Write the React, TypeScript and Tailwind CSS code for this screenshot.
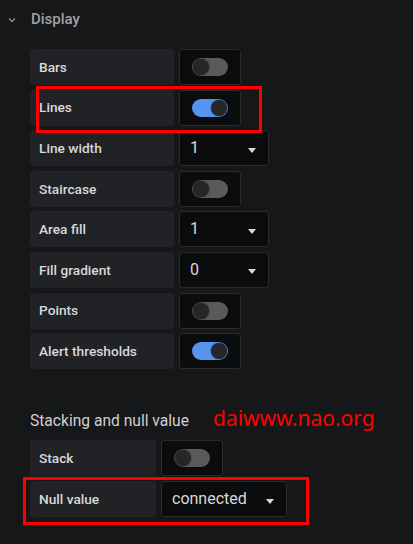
import React from "react";

type Row =
  | { label: string; kind: "toggle"; on: boolean }
  | { label: string; kind: "select"; value: string; width: number };

const displayRows: Row[] = [
  { label: "Bars", kind: "toggle", on: false },
  { label: "Lines", kind: "toggle", on: true },
  { label: "Line width", kind: "select", value: "1", width: 90 },
  { label: "Staircase", kind: "toggle", on: false },
  { label: "Area fill", kind: "select", value: "1", width: 90 },
  { label: "Fill gradient", kind: "select", value: "0", width: 90 },
  { label: "Points", kind: "toggle", on: false },
  { label: "Alert thresholds", kind: "toggle", on: true },
];

const stackRows: Row[] = [
  { label: "Stack", kind: "toggle", on: false },
  { label: "Null value", kind: "select", value: "connected", width: 126 },
];

function Toggle({ on }: { on: boolean }) {
  return (
    <div className="w-[62px] h-[36px] rounded-[3px] border border-[#2a2b2f] bg-[#0b0c0e] flex items-center pl-[12px]">
      <div
        className={
          on
            ? "w-[36px] h-[18px] rounded-full bg-[#5794f2] flex items-center justify-end pr-[1px]"
            : "w-[36px] h-[18px] rounded-full bg-[#5a5a5b] flex items-center justify-start pl-[1px]"
        }
      >
        <div className="w-[16px] h-[16px] rounded-full bg-[#262628] shadow-[0_0_2px_rgba(0,0,0,0.6)]" />
      </div>
    </div>
  );
}

function Select({ value, width }: { value: string; width: number }) {
  return (
    <div
      className="h-[36px] rounded-[3px] border border-[#2a2b2f] bg-[#0b0c0e] flex items-center justify-between pl-[10px] pr-[12px]"
      style={{ width }}
    >
      <span className="text-[16px] text-[#d8d9da] leading-none">{value}</span>
      <span className="mt-[4px] w-0 h-0 border-l-[4px] border-r-[4px] border-t-[5px] border-l-transparent border-r-transparent border-t-[#d8d9da]" />
    </div>
  );
}

function FormRow({ row, labelWidth }: { row: Row; labelWidth: number }) {
  return (
    <div className="flex items-center gap-[5px] h-[36px]">
      <div
        className="h-[36px] rounded-[3px] bg-[#212226] flex items-center pl-[9px] text-[13.7px] font-medium text-[#d8d9da]"
        style={{ width: labelWidth }}
      >
        {row.label}
      </div>
      {row.kind === "toggle" ? <Toggle on={row.on} /> : <Select value={row.value} width={row.width} />}
    </div>
  );
}

export default function App() {
  return (
    <div
      className="relative w-[413px] h-[544px] overflow-hidden bg-[#161719]"
      style={{ fontFamily: "Roboto, 'Liberation Sans', sans-serif" }}
    >
      <div className="h-[38px] flex items-center">
        <svg className="ml-[8px] mt-[2px]" width="8" height="6" viewBox="0 0 8 6" fill="none">
          <path d="M1 1.5 L4 4.5 L7 1.5" stroke="#8e9095" strokeWidth="1.3" />
        </svg>
        <span className="ml-[15px] text-[15px] font-medium text-[#9fa1a6]">Display</span>
      </div>

      <div className="pl-[30px] pt-[11px] flex flex-col gap-[4.6px]">
        {displayRows.map((r) => (
          <FormRow key={r.label} row={r} labelWidth={144} />
        ))}
      </div>

      <div className="pl-[30px] mt-[41px] h-[24px] flex items-center text-[15.6px] text-[#cfd0d2]">
        Stacking and null value
      </div>

      <div className="pl-[30px] mt-[6px] flex flex-col gap-[5px]">
        {stackRows.map((r) => (
          <FormRow key={r.label} row={r} labelWidth={126} />
        ))}
      </div>

      <div
        className="absolute left-[213px] top-[405px] h-[28px] flex items-center text-[21px] text-[#ff0000]"
        style={{ fontFamily: "'Noto Sans', 'Open Sans', sans-serif" }}
      >
        daiwww.nao.org
      </div>

      <div className="absolute left-[36px] top-[86px] w-[226px] h-[47px] border-[3px] border-[#ff0000]" />
      <div className="absolute left-[23px] top-[477px] w-[286px] h-[48px] border-[3px] border-[#ff0000]" />
    </div>
  );
}
